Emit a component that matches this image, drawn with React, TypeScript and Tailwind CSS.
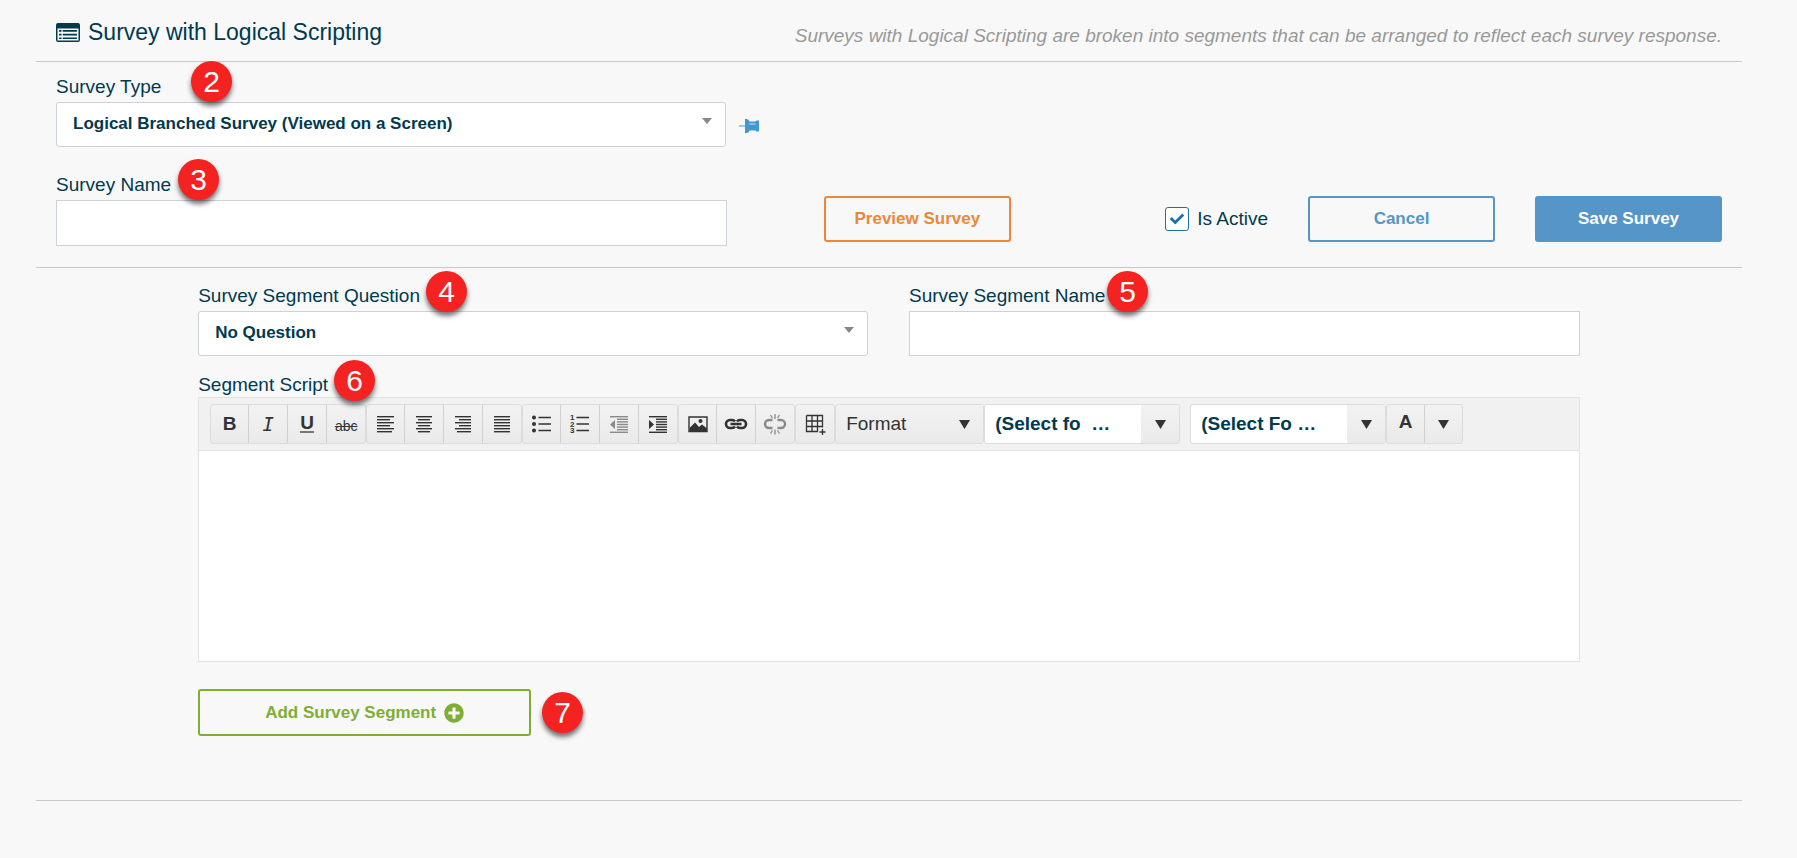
import { useState } from "react";
import type { ReactNode } from "react";
import { FaCheck, FaPlusCircle } from "react-icons/fa";

export default function App() {
  const [isActive, setIsActive] = useState(true);

  return (
    <main className="min-h-screen bg-[#f8f8f8] pr-[55px] pl-9 font-['Liberation_Sans',Arial,sans-serif] text-[19px] leading-6 text-[#003a4f]">
      <header className="flex items-center justify-between border-b border-[#c8c8c8] px-5 pt-[14px] pb-[11px]">
        <h1 className="flex items-center gap-2 text-[23px] leading-9">
          <ListIcon />
          Survey with Logical Scripting
        </h1>
        <p className="pt-2 text-[#999] italic">
          Surveys with Logical Scripting are broken into segments that can be arranged to reflect each survey response.
        </p>
      </header>

      <section className="border-b border-[#c8c8c8] pt-3 pb-[21px]">
        <div className="flex items-end">
          <div className="w-5/12 px-5">
            <FieldLabel htmlFor="survey-type" step={2} className="pb-[3px]" badge="-top-[13px] left-[135px]">
              Survey Type
            </FieldLabel>
            <SelectBox id="survey-type" value="Logical Branched Survey (Viewed on a Screen)" />
          </div>
          <button type="button" aria-label="Pin survey type" className="-ml-2 pb-[14px]">
            <PinIcon />
          </button>
        </div>

        <div className="mt-[25px] flex items-end">
          <div className="w-5/12 px-5">
            <FieldLabel htmlFor="survey-name" step={3} className="pb-[3px]" badge="-top-[13px] left-[122px]">
              Survey Name
            </FieldLabel>
            <TextBox id="survey-name" height="h-[46px]" />
          </div>
          <div className="flex flex-1 items-center pr-5 pb-1 pl-[77px]">
            <ActionButton tone="border-[#ec873a] text-[#ec873a]">Preview Survey</ActionButton>
            <label className="mr-10 ml-auto flex items-center gap-2">
              <span className="relative flex">
                <input
                  type="checkbox"
                  checked={isActive}
                  onChange={(e) => setIsActive(e.target.checked)}
                  className="h-6 w-6 appearance-none rounded-[3px] border border-[#1b72a8] bg-white"
                />
                {isActive && (
                  <FaCheck className="pointer-events-none absolute inset-0 m-auto text-[14px] text-[#1b72a8]" />
                )}
              </span>
              Is Active
            </label>
            <ActionButton tone="mr-10 border-[#5695c7] text-[#5695c7]">Cancel</ActionButton>
            <ActionButton tone="border-[#5695c7] bg-[#5695c7] text-white">Save Survey</ActionButton>
          </div>
        </div>
      </section>

      <section className="border-b border-[#c8c8c8] pt-[15px] pb-16">
        <div className="mx-auto w-10/12">
          <div className="flex">
            <div className="w-1/2 px-5">
              <FieldLabel htmlFor="segment-question" step={4} className="pb-[3px]" badge="-top-3 left-[228px]">
                Survey Segment Question
              </FieldLabel>
              <SelectBox id="segment-question" value="No Question" />
            </div>
            <div className="w-1/2 px-5">
              <FieldLabel htmlFor="segment-name" step={5} className="pb-[3px]" badge="-top-3 left-[198px]">
                Survey Segment Name
              </FieldLabel>
              <TextBox id="segment-name" height="h-[45px]" />
            </div>
          </div>

          <div className="mt-4 px-5">
            <FieldLabel htmlFor="segment-script" step={6} badge="-top-3 left-[136px]">
              Segment Script
            </FieldLabel>
            <div className="border border-[#e2e2e2] bg-white">
              <Toolbar />
              <textarea id="segment-script" className="block h-[210px] w-full resize-none p-3 outline-none" />
            </div>
            <div className="relative mt-[27px] flex">
              <button
                type="button"
                className="flex h-[47px] w-[333px] items-center justify-center gap-2 rounded-[3px] border-2 border-[#7fae35] text-[17px] font-bold text-[#7fae35]"
              >
                Add Survey Segment
                <FaPlusCircle className="text-[20px]" />
              </button>
              <StepBadge step={7} className="top-[3px] left-[344px]" />
            </div>
          </div>
        </div>
      </section>
    </main>
  );
}

function StepBadge({ step, className }: { step: number; className: string }) {
  return (
    <span
      className={`absolute z-10 flex h-[41px] w-[41px] items-center justify-center rounded-full bg-[#f52222] text-[30px] leading-none text-white shadow-[0_4px_5px_rgba(0,0,0,0.55)] ${className}`}
    >
      {step}
    </span>
  );
}

function FieldLabel({
  htmlFor,
  step,
  badge,
  className = "",
  children,
}: {
  htmlFor: string;
  step: number;
  badge: string;
  className?: string;
  children: ReactNode;
}) {
  return (
    <div className={`relative pt-px ${className}`}>
      <label htmlFor={htmlFor} className="block">
        {children}
      </label>
      <StepBadge step={step} className={badge} />
    </div>
  );
}

function SelectBox({ id, value }: { id: string; value: string }) {
  return (
    <div className="relative mr-px">
      <select
        id={id}
        className="block h-[45px] w-full appearance-none rounded-[3px] border border-[#ccd2d8] bg-white px-4 pb-0.5 text-[17px] font-bold text-[#003a4f]"
      >
        <option>{value}</option>
      </select>
      <svg width="10" height="6" className="pointer-events-none absolute top-4 right-[14px]" fill="#888">
        <path d="M0 0h10L5 6z" />
      </svg>
    </div>
  );
}

function TextBox({ id, height }: { id: string; height: string }) {
  return <input id={id} type="text" className={`block w-full border border-[#ccd2d8] bg-white px-4 ${height}`} />;
}

function ActionButton({ tone, children }: { tone: string; children: ReactNode }) {
  return (
    <button type="button" className={`h-[46px] w-[187px] rounded-[3px] border-2 text-[17px] font-bold ${tone}`}>
      {children}
    </button>
  );
}

/* Editor toolbar */

function Tool({ children }: { children: ReactNode }) {
  return (
    <svg width="20" height="20" viewBox="0 0 20 20" fill="currentColor" overflow="visible">
      {children}
    </svg>
  );
}

// each row is [x, width]
function Lines({ rows, pitch = 3 }: { rows: [number, number][]; pitch?: number }) {
  return (
    <>
      {rows.map(([x, w], i) => (
        <rect key={i} x={x} y={2 + i * pitch} width={w} height={1.4} />
      ))}
    </>
  );
}

const indentRows: [number, number][] = [[1, 18], [8, 11], [8, 11], [8, 11], [8, 11], [8, 11], [1, 18]];

const toolGroups: { label: string; muted?: boolean; icon: ReactNode }[][] = [
  [
    { label: "Bold", icon: <b>B</b> },
    { label: "Italic", icon: <i className="font-['DejaVu_Sans_Mono',monospace]">I</i> },
    { label: "Underline", icon: <b className="border-b-2 border-[#777] leading-4">U</b> },
    { label: "Strikethrough", icon: <s className="pt-1 text-sm">abc</s> },
  ],
  [
    { label: "Align left", icon: <Tool><Lines rows={[[1, 17], [1, 13], [1, 17], [1, 13], [1, 17], [1, 15]]} /></Tool> },
    { label: "Align center", icon: <Tool><Lines rows={[[2, 16], [4, 12], [2, 16], [4, 12], [2, 16], [4, 12]]} /></Tool> },
    { label: "Align right", icon: <Tool><Lines rows={[[2, 16], [6, 12], [2, 16], [6, 12], [2, 16], [4, 14]]} /></Tool> },
    { label: "Justify", icon: <Tool><Lines rows={[[2, 16], [2, 16], [2, 16], [2, 16], [2, 16], [2, 16]]} /></Tool> },
  ],
  [
    {
      label: "Bulleted list",
      icon: (
        <Tool>
          <circle cx="2" cy="3.500" r="2" />
          <circle cx="2" cy="10" r="2" />
          <circle cx="2" cy="16.500" r="2" />
          <path d="M6.500 3.500H19M6.500 10H19M6.500 16.500H19" stroke="currentColor" strokeWidth="1.400" />
        </Tool>
      ),
    },
    {
      label: "Numbered list",
      icon: (
        <Tool>
          <g fontSize="8" fontWeight="bold">
            <text x="0" y="6">1</text>
            <text x="0" y="12.500">2</text>
            <text x="0" y="19">3</text>
          </g>
          <path d="M6.500 3.500H19M6.500 10H19M6.500 16.500H19" stroke="currentColor" strokeWidth="1.400" />
        </Tool>
      ),
    },
    {
      label: "Outdent",
      muted: true,
      icon: (
        <Tool>
          <Lines pitch={2.6} rows={indentRows} />
          <path d="M1 10.500l5-4.500v9z" />
        </Tool>
      ),
    },
    {
      label: "Indent",
      icon: (
        <Tool>
          <Lines pitch={2.6} rows={indentRows} />
          <path d="M6 10.500L1 6v9z" />
        </Tool>
      ),
    },
  ],
  [
    {
      label: "Insert image",
      icon: (
        <Tool>
          <path d="M1 3h18v14.500H1z" stroke="currentColor" strokeWidth="1.400" fill="none" />
          <path d="M1.500 14l5.500-5.500 4 4.500 3-2.500 5 4V17h-17.500z" />
          <circle cx="12.500" cy="7" r="2" />
        </Tool>
      ),
    },
    {
      label: "Insert link",
      icon: (
        <Tool>
          <path
            d="M9 7.500Q8 6 6 6H4a4 4 0 0 0 0 8h2q2 0 3-1.500M11 7.500Q12 6 14 6h2a4 4 0 0 1 0 8h-2q-2 0-3-1.500M4.500 10h11"
            stroke="currentColor"
            strokeWidth="2.600"
            fill="none"
          />
        </Tool>
      ),
    },
    {
      label: "Remove link",
      muted: true,
      icon: (
        <Tool>
          <path
            d="M7.500 6H4a4 4 0 0 0 0 8h3.500M12.500 6H16a4 4 0 0 1 0 8h-3.500"
            stroke="currentColor"
            strokeWidth="2.400"
            fill="none"
          />
          <path
            d="M10 0v5M5.500 1l2 3M14.500 1l-2 3M10 20.500v-5M5.500 19.500l2-3M14.500 19.500l-2-3"
            stroke="currentColor"
            strokeWidth="1.300"
            fill="none"
          />
        </Tool>
      ),
    },
  ],
  [
    {
      label: "Insert table",
      icon: (
        <Tool>
          <path
            d="M1.500 1.500h16v12M13 17.500H1.500v-16M1.500 7h16M1.500 12.500h16M7 1.500v16M12.500 1.500v16M17.500 15v6M14.500 18h6"
            stroke="currentColor"
            strokeWidth="1.300"
            fill="none"
          />
        </Tool>
      ),
    },
  ],
];

function Arrow() {
  return (
    <svg width="11" height="9" fill="#333">
      <path d="M0 0h11L5.500 9z" />
    </svg>
  );
}

function Toolbar() {
  return (
    <div className="flex h-[53px] items-center border-b border-[#e2e2e2] bg-[#f1f1f1] px-[11px] text-[#333]">
      {toolGroups.map((group) => (
        <div
          key={group[0].label}
          className="flex h-10 divide-x divide-[#d0d0d0] rounded-[3px] border border-[#dcdcdc] bg-gradient-to-b from-[#f2f2f2] to-[#eaeaea]"
        >
          {group.map((tool) => (
            <button
              key={tool.label}
              type="button"
              aria-label={tool.label}
              className={`flex w-[39px] items-center justify-center first:w-[38px] last:w-[38px] ${tool.muted ? "text-[#8a8a8a]" : ""}`}
            >
              {tool.icon}
            </button>
          ))}
        </div>
      ))}
      <ToolSelect label="Format" value="Format" className="w-[149px]" field="bg-transparent text-[#333]" />
      <ToolSelect
        label="Font name"
        value={"(Select fo\u00a0 …"}
        className="mr-[10px] w-[196px]"
        field="bg-white font-bold text-[#003a4f]"
      />
      <ToolSelect
        label="Font size"
        value="(Select Fo …"
        className="w-[196px]"
        field="bg-white font-bold text-[#003a4f]"
      />
      <div className="flex h-10 divide-x divide-[#d0d0d0] rounded-[3px] border border-[#dcdcdc] bg-gradient-to-b from-[#f2f2f2] to-[#eaeaea]">
        <button type="button" aria-label="Text color" className="w-[38px] pb-1 font-bold">
          A
        </button>
        <button type="button" aria-label="Choose text color" className="flex w-[37px] items-center justify-center">
          <Arrow />
        </button>
      </div>
    </div>
  );
}

function ToolSelect({
  label,
  value,
  className,
  field,
}: {
  label: string;
  value: string;
  className: string;
  field: string;
}) {
  return (
    <div
      className={`relative h-10 rounded-[3px] border border-[#dcdcdc] bg-gradient-to-b from-[#f2f2f2] to-[#eaeaea] ${className}`}
    >
      <select aria-label={label} className={`h-full w-full appearance-none rounded-[3px] px-[10px] ${field}`}>
        <option>{value}</option>
      </select>
      <span className="pointer-events-none absolute inset-y-0 right-0 flex w-[38px] items-center justify-center bg-gradient-to-b from-[#f2f2f2] to-[#eaeaea]">
        <Arrow />
      </span>
    </div>
  );
}

function ListIcon() {
  return (
    <svg width="24" height="19" viewBox="0 0 24 19" fill="currentColor">
      <path fillRule="evenodd" d="M2 0h20a2 2 0 0 1 2 2v15a2 2 0 0 1-2 2H2a2 2 0 0 1-2-2V2a2 2 0 0 1 2-2zM1.500 5.500v12h21v-12z" />
      <path d="M3 7h2.500v1.700H3zM3 10.700h2.500v1.700H3zM3 14.400h2.500v1.700H3zM6.700 7H21v1.700H6.700zM6.700 10.700H21v1.700H6.700zM6.700 14.400H21v1.700H6.700z" />
    </svg>
  );
}

function PinIcon() {
  return (
    <svg width="20" height="14" viewBox="0 0 20 14" fill="#4398d0">
      <path d="M0 6.500h6V0h1.500Q10 0 10.500 2.500H16.500q.3-1 1.500-1h2v11h-2q-1.200 0-1.500-1h-6Q10 14 7.500 14H6V7.500H0z" />
      <path d="M10.500 5h6" stroke="#cfe5f3" />
    </svg>
  );
}
